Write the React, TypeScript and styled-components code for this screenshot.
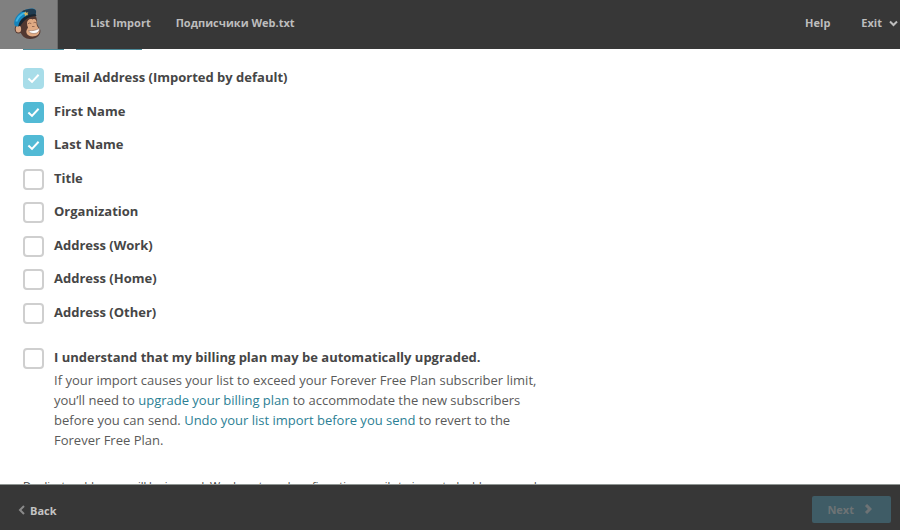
import React, { useState } from 'react';
import styled, { createGlobalStyle } from 'styled-components';

const GlobalStyle = createGlobalStyle`
  *, *::before, *::after { box-sizing: border-box; }
  body {
    margin: 0;
    background: #fff;
    color: #464646;
    font-family: 'Open Sans', 'Noto Sans', sans-serif;
    font-size: 13px;
  }
`;

const Page = styled.div`
  display: flex;
  flex-direction: column;
  height: 100vh;
`;

const Header = styled.header`
  display: flex;
  flex: none;
  align-items: stretch;
  height: 49px;
  padding-right: 2px;
  background: #373737;
  color: #bdbdbd;
  font-size: 11px;
  font-weight: 700;
  line-height: 16px;
`;

const LogoLink = styled.a`
  display: flex;
  width: 58px;
  padding: 8px 13px;
  background: #808080;
  border-right: 1px solid #6a6a6a;
`;

const Crumbs = styled.nav`
  display: flex;
  align-items: center;
  gap: 25px;
  padding: 0 32px;
  padding-bottom: 3px;
`;

const Actions = styled.div`
  display: flex;
  align-items: center;
  gap: 31px;
  margin-left: auto;
  padding-bottom: 3px;
`;

const HeaderLink = styled.a`
  color: inherit;
  text-decoration: none;
`;

const ExitButton = styled.button`
  display: flex;
  align-items: center;
  gap: 7px;
  padding: 0;
  border: 0;
  background: none;
  color: inherit;
  font: inherit;
  cursor: pointer;
`;

const Main = styled.main`
  flex: 1 1 0;
  min-height: 0;
  overflow: hidden;
  padding: 0 23px;
`;

const Edges = styled.div`
  display: flex;
  gap: 12px;
  height: 1px;
`;

const Edge = styled.span<{ $wide?: boolean }>`
  width: ${(p) => (p.$wide ? 66 : 41)}px;
  background: #4d8a99;
`;

const FieldList = styled.ul`
  display: grid;
  grid-auto-rows: 1fr;
  height: 268px;
  margin: 18px 0 0;
  padding: 0;
  list-style: none;
`;

const Field = styled.label<{ $disabled?: boolean }>`
  display: flex;
  align-items: flex-start;
  gap: 10px;
  font-weight: 700;
  line-height: 18px;
  cursor: ${(p) => (p.$disabled ? 'default' : 'pointer')};
`;

const Box = styled.span`
  display: grid;
  flex: none;
  width: 21px;
  height: 21px;
  place-items: center;

  > * { grid-area: 1 / 1; }
  svg { pointer-events: none; }
`;

const BoxInput = styled.input`
  width: 21px;
  height: 21px;
  margin: 0;
  appearance: none;
  border: 2px solid #cfcfcf;
  border-radius: 4px;
  background: #fff;

  &:checked { border-color: #52bad5; background: #52bad5; }
  &:checked:disabled { border-color: #a8dde9; background: #a8dde9; }
`;

const Consent = styled.section`
  max-width: 518px;
  margin-top: 12px;
`;

const ConsentText = styled.p`
  margin: 1px 0 0 31px;
  color: #5a5a5a;
  line-height: 20px;
`;

const TextLink = styled.a`
  color: #2c7f95;
  text-decoration: none;
`;

const Note = styled.p`
  margin: 28px 0 0;
  font-size: 11px;
  line-height: 16px;
`;

const Footer = styled.footer`
  display: flex;
  flex: none;
  align-items: center;
  justify-content: space-between;
  height: 46px;
  padding: 3px 9px 0 18px;
  border-top: 1px solid #8f9592;
  background: #373737;
`;

const FooterButton = styled.button<{ $primary?: boolean }>`
  display: flex;
  align-items: center;
  gap: ${(p) => (p.$primary ? 10 : 5)}px;
  height: 27px;
  padding: ${(p) => (p.$primary ? '0 19px 0 15px' : '2px 0 0')};
  border: 0;
  border-radius: 2px;
  background: ${(p) => (p.$primary ? '#3f5c66' : 'none')};
  color: ${(p) => (p.$primary ? '#6d7375' : '#c4c4c4')};
  font: 700 11px 'Open Sans', sans-serif;
`;

const Tick = () => (
  <svg width="13" height="11" viewBox="0 0 13 11" fill="none" aria-hidden="true">
    <path d="M1.4 5.6 5 8.9 11.6 1.8" stroke="#fff" strokeWidth="2" />
  </svg>
);

type ChevronProps = { points: string; width: number; height: number; color: string; weight?: number };

const Chevron = ({ points, width, height, color, weight = 2 }: ChevronProps) => (
  <svg width={width} height={height} fill="none" aria-hidden="true">
    <polyline points={points} stroke={color} strokeWidth={weight} />
  </svg>
);

const Monkey = () => (
  <svg width="30" height="32" viewBox="0 0 30 32" role="img" aria-label="MailChimp">
    <path d="M6 17C7 10 13 5 19 6c4 .5 5 4 5 8 0 3 1 4 3 7 2 5-3 10-10 10-5 0-8-3-9.500-7z" fill="#523831" />
    <ellipse cx="5.500" cy="21" rx="3.800" ry="4.600" fill="#523831" />
    <ellipse cx="5.400" cy="21" rx="2.700" ry="3.500" fill="#dcaa89" />
    <path d="M14 15c0-3 3-5 5.500-3.500C22 10 24 12 23.500 15c0 2 .5 3 2 5 2 3 1 7-3 8-4 1-8 0-9-3-.7-2 .8-4 1.500-5.500-.8-1.500-1-3-1-4.500z" fill="#e0aa83" />
    <path d="M14.800 15.800q1.800-1.500 3.500-.2M20.500 14.800q1.300-1 2.500 0" fill="none" stroke="#8a5f4b" strokeWidth=".9" />
    <path d="M19 18.500h2.500" stroke="#8f6450" strokeWidth=".9" />
    <path d="M15.500 22.500c4 .6 7.500-.2 11-2.200 0 3.200-2 5.200-5.500 5.200-3 0-4.800-1-5.500-3z" fill="#fff" stroke="#94705f" strokeWidth=".6" />
    <path d="M1.300 16.500C.5 11 5 4 13 1.500c4-1.200 8-1.500 9.300.2C23.500 3 23 5 22.500 6.500 15 6 9 10.500 6.500 18c-2.200.8-4.700.5-5.200-1.500z" fill="#1683ba" />
    <path d="M8.500 3.500C13 .8 19.500-.2 22.300 1.700c1.200 1 .9 3.300.2 4.800-3-.3-5.500.2-8 1.300L13 4.500z" fill="#203b50" />
    <path d="M5.200 18.400C6.500 11.500 12 5.800 22.500 6l1 1.900C16.500 7.800 11 11.500 7.500 17.800z" fill="#18242f" />
    <path d="M3.300 13.500C4.800 9.500 8 6.300 12 4.600" fill="none" stroke="#3db4e5" strokeWidth="2" />
    <path d="m12.300 3.300 1 1.500 2-.5-.8 1.700.8 1.300-2-.2-1.300 1.300-.2-2-1.500-1 1.700-.5z" fill="#d5b45f" />
  </svg>
);

type CheckFieldProps = { label: string; checked?: boolean; disabled?: boolean };

const CheckField = ({ label, checked = false, disabled }: CheckFieldProps) => {
  const [on, setOn] = useState(checked);
  return (
    <Field $disabled={disabled}>
      <Box>
        <BoxInput type="checkbox" checked={on} disabled={disabled} onChange={() => setOn(!on)} />
        {on && <Tick />}
      </Box>
      {label}
    </Field>
  );
};

const fields: CheckFieldProps[] = [
  { label: 'Email Address (Imported by default)', checked: true, disabled: true },
  { label: 'First Name', checked: true },
  { label: 'Last Name', checked: true },
  { label: 'Title' },
  { label: 'Organization' },
  { label: 'Address (Work)' },
  { label: 'Address (Home)' },
  { label: 'Address (Other)' },
];

export default function App() {
  return (
    <Page>
      <GlobalStyle />
      <Header>
        <LogoLink href="#"><Monkey /></LogoLink>
        <Crumbs>
          <HeaderLink href="#">List Import</HeaderLink>
          <HeaderLink href="#">Подписчики Web.txt</HeaderLink>
        </Crumbs>
        <Actions>
          <HeaderLink href="#">Help</HeaderLink>
          <ExitButton type="button">
            Exit
            <Chevron points="1,1.500 4.500,5 8,1.500" width={9} height={7} color="#bdbdbd" />
          </ExitButton>
        </Actions>
      </Header>
      <Main>
        <Edges><Edge /><Edge $wide /></Edges>
        <FieldList>
          {fields.map((field) => (
            <li key={field.label}><CheckField {...field} /></li>
          ))}
        </FieldList>
        <Consent>
          <CheckField label="I understand that my billing plan may be automatically upgraded." />
          <ConsentText>
            If your import causes your list to exceed your Forever Free Plan subscriber limit, you’ll need to{' '}
            <TextLink href="#">upgrade your billing plan</TextLink> to accommodate the new subscribers before you can send.{' '}
            <TextLink href="#">Undo your list import before you send</TextLink> to revert to the Forever Free Plan.
          </ConsentText>
        </Consent>
        <Note>Duplicate addresses will be ignored. We do not send confirmation emails to imported addresses and</Note>
      </Main>
      <Footer>
        <FooterButton type="button">
          <Chevron points="6,1 2,5 6,9" width={7} height={10} color="#8a8a8a" />
          Back
        </FooterButton>
        <FooterButton type="button" $primary disabled>
          Next
          <Chevron points="2,1 6,5 2,9" width={8} height={10} color="#6d7375" weight={3} />
        </FooterButton>
      </Footer>
    </Page>
  );
}
